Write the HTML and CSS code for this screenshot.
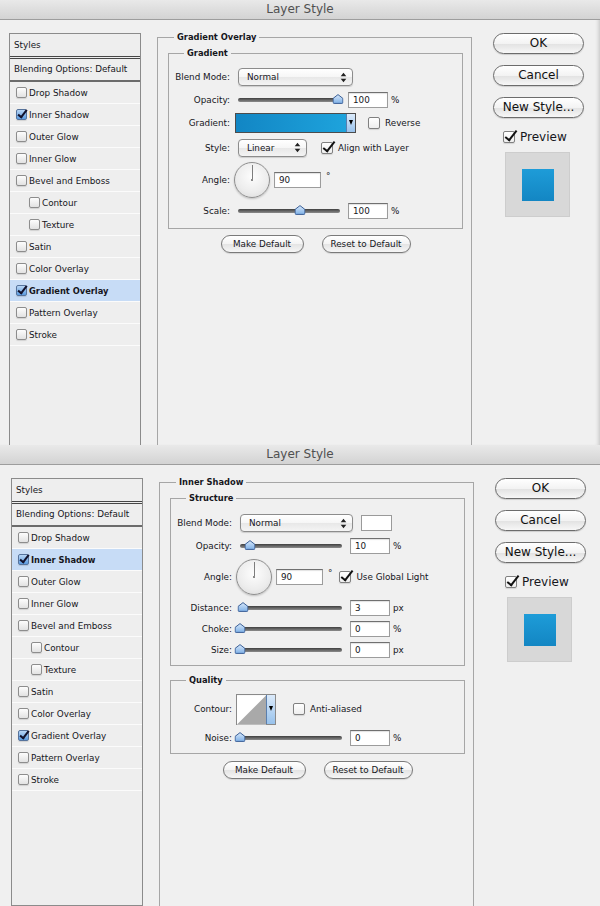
FILE: index.html
```html
<!DOCTYPE html>
<html lang="en">
<head>
    <meta charset="UTF-8">
    <meta name="viewport" content="width=device-width, initial-scale=1.0">
    <title>Layer Style</title>
    <link rel="stylesheet" href="styles.css">
</head>
<body>
    <!-- shared fill for the slider thumbs -->
    <svg class="defs" width="0" height="0">
        <defs>
            <linearGradient id="thumb-fill" x1="0" y1="0" x2="0" y2="1">
                <stop offset="0" stop-color="#d9e9fb"/>
                <stop offset="1" stop-color="#7eb0e6"/>
            </linearGradient>
        </defs>
    </svg>

    <!-- Dialog 1: Gradient Overlay -->
    <div class="dialog dialog-top">
        <div class="titlebar">Layer Style</div>
        <div class="dialog-body">
            <div class="styles-list">
                <div class="list-head">Styles</div>
                <div class="list-blend">Blending Options: Default</div>
                <div class="list-item"><span class="cb"></span>Drop Shadow</div>
                <div class="list-item"><span class="cb cb-blue cb-on"></span>Inner Shadow</div>
                <div class="list-item"><span class="cb"></span>Outer Glow</div>
                <div class="list-item"><span class="cb"></span>Inner Glow</div>
                <div class="list-item"><span class="cb"></span>Bevel and Emboss</div>
                <div class="list-item sub"><span class="cb"></span>Contour</div>
                <div class="list-item sub"><span class="cb"></span>Texture</div>
                <div class="list-item"><span class="cb"></span>Satin</div>
                <div class="list-item"><span class="cb"></span>Color Overlay</div>
                <div class="list-item selected"><span class="cb cb-blue cb-on"></span>Gradient Overlay</div>
                <div class="list-item"><span class="cb"></span>Pattern Overlay</div>
                <div class="list-item"><span class="cb"></span>Stroke</div>
            </div>

            <fieldset class="group-outer">
                <legend>Gradient Overlay</legend>
                <fieldset class="group group-gradient">
                    <legend>Gradient</legend>
                    <div class="row">
                        <span class="lbl">Blend Mode:</span>
                        <div class="select select-wide">
                            <span>Normal</span>
                            <svg class="updown" width="7" height="11" viewBox="0 0 7 11"><path d="M3.5 .8 6.3 4.2H.7Z M3.5 10.2 6.3 6.8H.7Z"/></svg>
                        </div>
                    </div>
                    <div class="row row-23">
                        <span class="lbl">Opacity:</span>
                        <div class="slider"><span class="thumb" style="left: 98%"><svg width="11" height="10" viewBox="0 0 11 10"><path d="M5.5 .6 10.4 4.4V8.4Q10.4 9.4 9.4 9.4H1.6Q.6 9.4 .6 8.4V4.4Z"/></svg></span></div>
                        <span class="field">100</span><span class="unit">%</span>
                    </div>
                    <div class="row row-24">
                        <span class="lbl">Gradient:</span>
                        <div class="gradient-picker"><div class="gradient-fill"></div><div class="drop-tab"></div></div>
                        <span class="cb cb-big cb-gap"></span><span class="cb-text">Reverse</span>
                    </div>
                    <div class="row row-25">
                        <span class="lbl">Style:</span>
                        <div class="select select-short">
                            <span>Linear</span>
                            <svg class="updown" width="7" height="11" viewBox="0 0 7 11"><path d="M3.5 .8 6.3 4.2H.7Z M3.5 10.2 6.3 6.8H.7Z"/></svg>
                        </div>
                        <span class="cb cb-big cb-on cb-gap-style"></span><span class="cb-text">Align with Layer</span>
                    </div>
                    <div class="row row-angle">
                        <span class="lbl">Angle:</span>
                        <div class="dial"></div>
                        <span class="field field-angle">90</span><span class="deg">°</span>
                    </div>
                    <div class="row">
                        <span class="lbl">Scale:</span>
                        <div class="slider"><span class="thumb" style="left: 61%"><svg width="11" height="10" viewBox="0 0 11 10"><path d="M5.5 .6 10.4 4.4V8.4Q10.4 9.4 9.4 9.4H1.6Q.6 9.4 .6 8.4V4.4Z"/></svg></span></div>
                        <span class="field">100</span><span class="unit">%</span>
                    </div>
                </fieldset>
                <div class="btn-row">
                    <span class="pill pill-make">Make Default</span>
                    <span class="pill pill-reset">Reset to Default</span>
                </div>
            </fieldset>

            <div class="side">
                <span class="side-btn">OK</span>
                <span class="side-btn">Cancel</span>
                <span class="side-btn">New Style...</span>
                <div class="preview-row"><span class="cb cb-big cb-on"></span>Preview</div>
                <div class="preview-box"><div class="preview-swatch"></div></div>
            </div>
        </div>
    </div>

    <!-- Dialog 2: Inner Shadow -->
    <div class="dialog dialog-second">
        <div class="titlebar">Layer Style</div>
        <div class="dialog-body">
            <div class="styles-list">
                <div class="list-head">Styles</div>
                <div class="list-blend">Blending Options: Default</div>
                <div class="list-item"><span class="cb"></span>Drop Shadow</div>
                <div class="list-item selected"><span class="cb cb-blue cb-on"></span>Inner Shadow</div>
                <div class="list-item"><span class="cb"></span>Outer Glow</div>
                <div class="list-item"><span class="cb"></span>Inner Glow</div>
                <div class="list-item"><span class="cb"></span>Bevel and Emboss</div>
                <div class="list-item sub"><span class="cb"></span>Contour</div>
                <div class="list-item sub"><span class="cb"></span>Texture</div>
                <div class="list-item"><span class="cb"></span>Satin</div>
                <div class="list-item"><span class="cb"></span>Color Overlay</div>
                <div class="list-item"><span class="cb cb-blue cb-on"></span>Gradient Overlay</div>
                <div class="list-item"><span class="cb"></span>Pattern Overlay</div>
                <div class="list-item"><span class="cb"></span>Stroke</div>
            </div>

            <fieldset class="group-outer">
                <legend>Inner Shadow</legend>
                <fieldset class="group group-structure">
                    <legend>Structure</legend>
                    <div class="row">
                        <span class="lbl">Blend Mode:</span>
                        <div class="select select-mid">
                            <span>Normal</span>
                            <svg class="updown" width="7" height="11" viewBox="0 0 7 11"><path d="M3.5 .8 6.3 4.2H.7Z M3.5 10.2 6.3 6.8H.7Z"/></svg>
                        </div>
                        <span class="color-box"></span>
                    </div>
                    <div class="row row-23">
                        <span class="lbl">Opacity:</span>
                        <div class="slider"><span class="thumb" style="left: 10%"><svg width="11" height="10" viewBox="0 0 11 10"><path d="M5.5 .6 10.4 4.4V8.4Q10.4 9.4 9.4 9.4H1.6Q.6 9.4 .6 8.4V4.4Z"/></svg></span></div>
                        <span class="field">10</span><span class="unit">%</span>
                    </div>
                    <div class="row row-angle">
                        <span class="lbl">Angle:</span>
                        <div class="dial"></div>
                        <span class="field field-angle">90</span><span class="deg">°</span>
                        <span class="cb cb-big cb-on cb-gap-light"></span><span class="cb-text">Use Global Light</span>
                    </div>
                    <div class="row row-21">
                        <span class="lbl">Distance:</span>
                        <div class="slider"><span class="thumb" style="left: 3%"><svg width="11" height="10" viewBox="0 0 11 10"><path d="M5.5 .6 10.4 4.4V8.4Q10.4 9.4 9.4 9.4H1.6Q.6 9.4 .6 8.4V4.4Z"/></svg></span></div>
                        <span class="field">3</span><span class="unit">px</span>
                    </div>
                    <div class="row row-21">
                        <span class="lbl">Choke:</span>
                        <div class="slider"><span class="thumb" style="left: 0%"><svg width="11" height="10" viewBox="0 0 11 10"><path d="M5.5 .6 10.4 4.4V8.4Q10.4 9.4 9.4 9.4H1.6Q.6 9.4 .6 8.4V4.4Z"/></svg></span></div>
                        <span class="field">0</span><span class="unit">%</span>
                    </div>
                    <div class="row row-21">
                        <span class="lbl">Size:</span>
                        <div class="slider"><span class="thumb" style="left: 0%"><svg width="11" height="10" viewBox="0 0 11 10"><path d="M5.5 .6 10.4 4.4V8.4Q10.4 9.4 9.4 9.4H1.6Q.6 9.4 .6 8.4V4.4Z"/></svg></span></div>
                        <span class="field">0</span><span class="unit">px</span>
                    </div>
                </fieldset>

                <fieldset class="group group-quality">
                    <legend>Quality</legend>
                    <div class="row row-contour">
                        <span class="lbl">Contour:</span>
                        <div class="contour-picker">
                            <svg width="30" height="30" viewBox="0 0 30 30"><rect width="30" height="30" fill="#fff"/><path d="M0 30 30 0V30Z" fill="#a9a9a9"/></svg>
                            <div class="drop-tab"></div>
                        </div>
                        <span class="cb cb-big cb-gap-aa"></span><span class="cb-text">Anti-aliased</span>
                    </div>
                    <div class="row row-noise">
                        <span class="lbl">Noise:</span>
                        <div class="slider"><span class="thumb" style="left: 0%"><svg width="11" height="10" viewBox="0 0 11 10"><path d="M5.5 .6 10.4 4.4V8.4Q10.4 9.4 9.4 9.4H1.6Q.6 9.4 .6 8.4V4.4Z"/></svg></span></div>
                        <span class="field">0</span><span class="unit">%</span>
                    </div>
                </fieldset>
                <div class="btn-row">
                    <span class="pill pill-make">Make Default</span>
                    <span class="pill pill-reset">Reset to Default</span>
                </div>
            </fieldset>

            <div class="side">
                <span class="side-btn">OK</span>
                <span class="side-btn">Cancel</span>
                <span class="side-btn">New Style...</span>
                <div class="preview-row"><span class="cb cb-big cb-on"></span>Preview</div>
                <div class="preview-box"><div class="preview-swatch"></div></div>
            </div>
        </div>
    </div>
</body>
</html>
```

FILE: styles.css
```css
* {
    box-sizing: border-box;
}
body {
    margin: 0;
    width: 600px;
    font-family: "DejaVu Sans", "Lucida Grande", sans-serif;
    font-size: 8.8px;
    color: #16161c;
    background: #f0f0f0;
}
.defs {
    position: absolute;
}

/* dialog frame */
.dialog {
    display: flex;
    flex-direction: column;
    height: 445px;
    overflow: hidden;
    background: #f0f0f0;
}
.dialog-top {
    box-shadow: inset -4px 0 4px -3px rgba(0, 0, 0, 0.2);
}
.dialog-second {
    height: 461px;
}
.titlebar {
    flex-shrink: 0;
    height: 20px;
    line-height: 19px;
    text-align: center;
    font-size: 12px;
    color: #505050;
    background: linear-gradient(#e9e9e9, #d3d3d3);
    border-bottom: 1px solid #9d9d9d;
}
.dialog-body {
    flex: 1;
    display: flex;
    align-items: stretch;
    min-height: 0;
    padding: 13px 0 0 9px;
}
.dialog-second .dialog-body {
    padding-left: 11px;
}

/* styles list */
.styles-list {
    flex-shrink: 0;
    width: 132px;
    border: 1px solid #8b8b8b;
    background: #eeeeee;
}
.dialog-top .styles-list {
    margin-bottom: -2px;
}
.list-head {
    height: 25px;
    line-height: 22px;
    padding-left: 4px;
    border-bottom: 3px double #474747;
}
.list-blend {
    height: 23px;
    line-height: 21px;
    padding-left: 4px;
    border-bottom: 2px solid #6b6b6b;
}
.list-item {
    display: flex;
    align-items: center;
    height: 22px;
    padding-left: 6px;
    border-bottom: 1px solid #fbfbfb;
}
.list-item.sub {
    padding-left: 19px;
}
.list-item.selected {
    background: #c7dcf6;
    font-weight: bold;
    font-size: 8.3px;
}

/* checkboxes */
.cb {
    position: relative;
    display: inline-block;
    flex-shrink: 0;
    width: 11px;
    height: 11px;
    margin-right: 2px;
    border: 1px solid #8d8d8d;
    border-radius: 2px;
    background: linear-gradient(#fdfdfd, #e2e2e2);
    box-shadow: 0 1px 1px rgba(0, 0, 0, 0.12);
}
.cb-blue {
    border-color: #56739c;
    background: linear-gradient(#b8d6f6, #5b9be0);
}
.cb-on::after {
    content: "";
    position: absolute;
    left: 3px;
    top: -2px;
    width: 3px;
    height: 8px;
    border: solid #12122c;
    border-width: 0 2px 2px 0;
    transform: rotate(38deg);
}
.cb-big {
    width: 12px;
    height: 12px;
    margin-right: 5px;
    background: linear-gradient(#ffffff, #eeeeee);
    border-color: #808080;
}
.cb-big.cb-on::after {
    left: 4px;
    top: -4px;
    width: 4px;
    height: 11px;
    border-color: #111;
    border-width: 0 2.5px 2.5px 0;
}
.cb-gap { margin-left: 12px; }
.cb-gap-style { margin-left: 14px; }
.cb-gap-light { margin-left: 7px; }
.cb-gap-aa { margin-left: 17px; }

/* group boxes */
fieldset {
    margin: 0;
    padding: 0;
    min-width: 0;
    border: 1px solid #a6a6a6;
}
legend {
    padding: 0 3px;
    line-height: 12px;
    font-weight: bold;
    font-size: 8.3px;
}
.group-outer {
    flex-shrink: 0;
    width: 315px;
    margin: -2px 0 0 16px;
    padding: 4px 8px 0 10px;
    border-bottom: none;
}
.group-outer > legend {
    margin-left: 6px;
}
.group > legend {
    margin-left: 15px;
}
.group-gradient {
    padding: 7px 0 6px;
}
.group-structure {
    padding: 8px 0 5px;
}
.group-quality {
    margin-top: 8px;
    padding: 7px 0 2px;
}

/* control rows */
.row {
    display: flex;
    align-items: center;
    height: 22px;
}
.row-21 { height: 21px; }
.row-23 { height: 23px; }
.row-24 { height: 24px; }
.row-25 { height: 25px; }
.row-angle { height: 40px; }
.row-contour { height: 32px; }
.row-noise { height: 26px; }
.lbl {
    flex-shrink: 0;
    width: 61px;
    margin-right: 8px;
    text-align: right;
    white-space: nowrap;
}

.select {
    display: flex;
    align-items: center;
    justify-content: space-between;
    height: 18px;
    padding: 0 5px 0 8px;
    border: 1px solid #8c8c8c;
    border-radius: 4px;
    background: linear-gradient(#ffffff, #f6f6f6 50%, #e8e8e8 52%, #f4f4f4);
    box-shadow: 0 1px 1px rgba(0, 0, 0, 0.15);
}
.select-wide { width: 115px; }
.select-mid { width: 113px; }
.select-short { width: 69px; }
.updown {
    fill: #222;
}

.slider {
    position: relative;
    flex-shrink: 0;
    width: 102px;
    height: 4px;
    border-radius: 2px;
    background: linear-gradient(#3f3f3f, #8c8c8c);
}
.thumb {
    position: absolute;
    bottom: -2px;
    width: 11px;
    height: 10px;
    transform: translateX(-50%);
}
.thumb svg {
    display: block;
}
.thumb path {
    fill: url(#thumb-fill);
    stroke: #3b5f96;
    stroke-width: 1;
}

.field {
    flex-shrink: 0;
    width: 40px;
    height: 16px;
    margin-left: 8px;
    padding-left: 4px;
    line-height: 14px;
    background: #fff;
    border: 1px solid #9c9c9c;
    border-top-color: #707070;
    box-shadow: inset 0 1px 1px rgba(0, 0, 0, 0.12);
}
.field-angle {
    width: 47px;
    margin-left: 4px;
}
.unit {
    margin-left: 3px;
}
.deg {
    margin: -9px 0 0 5px;
}

.gradient-picker {
    display: flex;
    width: 121px;
    height: 20px;
    margin-left: -3px;
    border: 1px solid #4c4c4c;
}
.gradient-fill {
    flex: 1;
    background: linear-gradient(90deg, #1286c4, #1ea3dc);
}
.drop-tab {
    position: relative;
    width: 9px;
    border-left: 1px solid #5a7fae;
    background: linear-gradient(#dbeafa, #98c2ec);
}
.drop-tab::after {
    content: "";
    position: absolute;
    left: 2px;
    top: 6px;
    border-left: 2px solid transparent;
    border-right: 2px solid transparent;
    border-top: 5px solid #000;
}
.contour-picker {
    display: flex;
    width: 40px;
    height: 31px;
    margin-left: -4px;
    border: 1px solid #8a8a8a;
}
.contour-picker svg {
    display: block;
}
.contour-picker .drop-tab::after {
    top: 11px;
}
.color-box {
    width: 31px;
    height: 16px;
    margin-left: 8px;
    background: #fff;
    border: 1px solid #9a9a9a;
}

.dial {
    position: relative;
    flex-shrink: 0;
    width: 36px;
    height: 36px;
    margin-left: -4px;
    border: 1px solid #8e8e8e;
    border-radius: 50%;
    background: radial-gradient(circle at 50% 40%, #fdfdfd, #ececec 60%, #d6d6d6);
    box-shadow: 0 1px 2px rgba(0, 0, 0, 0.2);
}
.dial::before {
    content: "";
    position: absolute;
    left: 17px;
    top: 2px;
    width: 1px;
    height: 15px;
    background: #7d7d7d;
}
.dial::after {
    content: "";
    position: absolute;
    left: 16px;
    top: 16px;
    width: 2px;
    height: 2px;
    background: #8a8a8a;
}

/* buttons */
.btn-row {
    display: flex;
    justify-content: center;
    gap: 18px;
    margin-top: 6px;
}
.group-quality + .btn-row {
    margin-top: 7px;
}
.pill {
    height: 18px;
    line-height: 16px;
    text-align: center;
    border: 1px solid #7a7a7a;
    border-radius: 9px;
    background: linear-gradient(#ffffff, #f3f3f3 50%, #e4e4e4 52%, #f6f6f6);
    box-shadow: 0 1px 1px rgba(0, 0, 0, 0.12);
}
.pill-make { width: 83px; }
.pill-reset { width: 89px; }

.side {
    flex-shrink: 0;
    width: 91px;
    margin-left: 21px;
}
.side-btn {
    display: block;
    height: 21px;
    margin-bottom: 11px;
    line-height: 19px;
    text-align: center;
    font-size: 12px;
    color: #111;
    border: 1px solid #6c6c6c;
    border-radius: 11px;
    background: linear-gradient(#ffffff, #f3f3f3 50%, #e2e2e2 52%, #f7f7f7);
    box-shadow: 0 1px 1px rgba(0, 0, 0, 0.15);
}
.preview-row {
    display: flex;
    align-items: center;
    height: 16px;
    padding-left: 10px;
    font-size: 12px;
}
.preview-box {
    display: flex;
    align-items: center;
    justify-content: center;
    width: 65px;
    height: 65px;
    margin: 7px 0 0 12px;
    background: #d8d8d8;
    border: 1px solid #cdcdcd;
}
.preview-swatch {
    width: 32px;
    height: 32px;
    background: linear-gradient(#1e9cd8, #1386c3);
}
```
